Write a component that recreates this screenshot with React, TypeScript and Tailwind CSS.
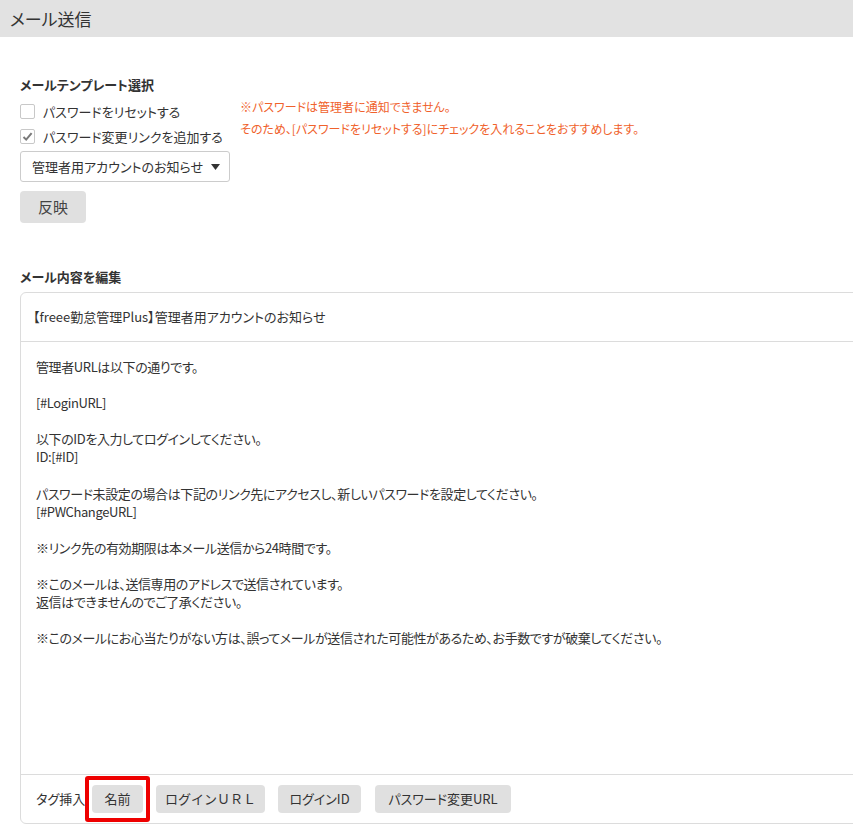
import React from 'react';

const jp = { fontFamily: '"Noto Sans CJK JP", "Noto Sans", sans-serif' };

const bodyLines = [
    '管理者URLは以下の通りです。',
    '',
    '[#LoginURL]',
    '',
    '以下のIDを入力してログインしてください。',
    'ID:[#ID]',
    '',
    'パスワード未設定の場合は下記のリンク先にアクセスし、新しいパスワードを設定してください。',
    '[#PWChangeURL]',
    '',
    '※リンク先の有効期限は本メール送信から24時間です。',
    '',
    '※このメールは、送信専用のアドレスで送信されています。',
    '返信はできませんのでご了承ください。',
    '',
    '※このメールにお心当たりがない方は、誤ってメールが送信された可能性があるため、お手数ですが破棄してください。',
];

const Checkbox: React.FC<{ checked?: boolean; label: string }> = ({ checked, label }) => (
    <label className="flex items-center h-[25px] gap-[8px]">
        <span className="w-[15px] h-[15px] border border-[#c8c8c8] rounded-[2px] bg-white flex items-center justify-center">
            {checked && (
                <svg width="11" height="11" viewBox="0 0 11 11">
                    <path d="M1.5 6 L4.2 8.6 L9.6 2.2" stroke="#7a7a7a" strokeWidth="2" fill="none" />
                </svg>
            )}
        </span>
        <span className="text-[13px] text-[#333] whitespace-nowrap">{label}</span>
    </label>
);

const TagButton: React.FC<{ label: string; className?: string }> = ({ label, className = '' }) => (
    <button className={`h-[28px] rounded-[4px] bg-[#e0e0e0] text-[13px] text-[#333] whitespace-nowrap ${className}`}>
        {label}
    </button>
);

export default function App() {
    return (
        <div
            className="w-[853px] h-[835px] overflow-hidden bg-white text-[#333] [font-feature-settings:'palt']"
            style={jp}
        >
            <div className="h-[37px] bg-[#e2e2e2] flex items-center pl-[10px]">
                <h1 className="text-[17px] text-[#333] leading-none">メール送信</h1>
            </div>

            <div className="pl-[20px] pt-[39px]">
                <h2 className="text-[13px] font-bold leading-[18px]">メールテンプレート選択</h2>
                <div className="flex mt-[5px]">
                    <div className="w-[220px]">
                        <Checkbox label="パスワードをリセットする" />
                        <Checkbox checked label="パスワード変更リンクを追加する" />
                        <div className="mt-[2px] w-[210px] h-[31px] border border-[#cccccc] rounded-[3px] flex items-center justify-between pl-[11px] pr-[9px]">
                            <span className="text-[13px] whitespace-nowrap">管理者用アカウントのお知らせ</span>
                            <svg width="9" height="6" viewBox="0 0 9 6" className="shrink-0">
                                <path d="M0 0 H9 L4.5 6 Z" fill="#333" />
                            </svg>
                        </div>
                        <button className="mt-[9px] w-[66px] h-[32px] rounded-[4px] bg-[#e0e0e0] text-[15px] text-[#444]">
                            反映
                        </button>
                    </div>
                    <div className="text-[12px] text-[#f0622c] leading-[22px] mt-[-3px]">
                        <p>※パスワードは管理者に通知できません。</p>
                        <p>そのため、[パスワードをリセットする]にチェックを入れることをおすすめします。</p>
                    </div>
                </div>

                <h2 className="mt-[45px] text-[13px] font-bold leading-[18px]">メール内容を編集</h2>
                <div className="mt-[6px] w-[860px] border border-[#dcdcdc] rounded-[6px]">
                    <div className="h-[49px] border-b border-[#dcdcdc] flex items-center pl-[12px] text-[13px]">
                        【freee勤怠管理Plus】管理者用アカウントのお知らせ
                    </div>
                    <div className="h-[433px] border-b border-[#dcdcdc] pl-[15px] pt-[16px] text-[13px] leading-[18.1px] tracking-[-0.4px]">
                        {bodyLines.map((line, i) => (
                            <div key={i} className="h-[18.1px] whitespace-nowrap">{line}</div>
                        ))}
                    </div>
                    <div className="h-[48px] flex items-center pl-[15px] text-[13px]">
                        <span className="w-[49px] whitespace-nowrap">タグ挿入</span>
                        <div className="border-[4px] border-[#ee0000] rounded-[3px] px-[3px] py-[5px] flex items-center">
                            <TagButton label="名前" className="w-[51px]" />
                        </div>
                        <TagButton label="ログインＵＲＬ" className="ml-[6px] w-[109px] [font-feature-settings:normal] text-[12.5px]" />
                        <TagButton label="ログインID" className="ml-[13px] w-[83px]" />
                        <TagButton label="パスワード変更URL" className="ml-[14px] w-[136px]" />
                    </div>
                </div>
            </div>
        </div>
    );
}
